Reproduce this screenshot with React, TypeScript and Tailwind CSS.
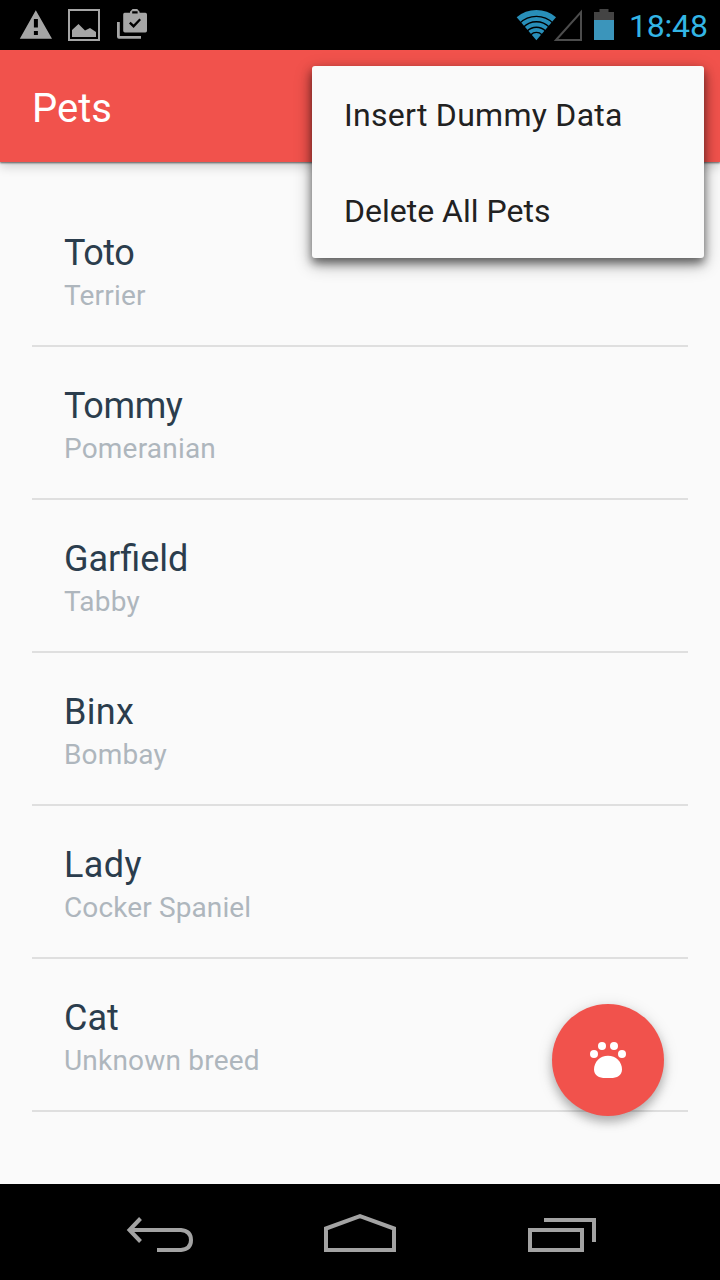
const pets = [
  { name: "Toto", breed: "Terrier", nameSpacing: "tracking-[-0.5px]", breedSpacing: "tracking-[0.2px]" },
  { name: "Tommy", breed: "Pomeranian", nameSpacing: "tracking-[-0.4px]", breedSpacing: "tracking-[0.2px]" },
  { name: "Garfield", breed: "Tabby", nameSpacing: "[word-spacing:0]", breedSpacing: "tracking-[0.2px]" },
  { name: "Binx", breed: "Bombay", nameSpacing: "tracking-[0.3px]", breedSpacing: "tracking-[0.15px]" },
  { name: "Lady", breed: "Cocker Spaniel", nameSpacing: "tracking-[0.4px]", breedSpacing: "tracking-[0.12px]" },
  { name: "Cat", breed: "Unknown breed", nameSpacing: "tracking-normal", breedSpacing: "tracking-[0.2px]" },
];

function StatusBar() {
  return (
    <header className="flex h-[50px] shrink-0 items-center justify-between bg-black">
      <svg className="h-[50px] w-[160px]" viewBox="0 0 160 50" fill="#a6a6a6">
        <path
          fillRule="evenodd"
          d="M35.8 10.2 52 38.7H19.8ZM33.9 19v8.6h4V19ZM33.9 31v4h4v-4Z"
        />
        <path fillRule="evenodd" d="M68 9h32v32H68ZM70 11v28h28V11Z" />
        <path d="M72 37v-7l6.5-6 6.5 6.5 5-2.5 6 4v5Z" />
        <path
          fillRule="evenodd"
          d="M124.6 12.8h5.4v-1l2.6-2.8h4.6l2.4 2.8v1h5.8q1.6 0 1.6 1.6v16.4q0 1.8-1.6 1.8H125q-1.8 0-1.8-1.8V14.4q0-1.6 1.4-1.6ZM132.2 13.4h5.4v-2.2h-5.4ZM130.6 21.8l-1.6 1.6 4.6 4.6 7.4-8-1.6-1.6-5.8 6.2Z"
        />
        <path d="M117 22h2.8v14H141v2.8h-22q-2 0-2-2Z" />
      </svg>
      <div className="flex items-center">
        <svg className="h-[50px] w-[121px]" viewBox="508 0 121 50">
          <path d="M516.7 17.2A30.2 30.2 0 0 1 556 17.2L536.4 40.3Z" fill="#288fb9" />
          <g fill="none" stroke="#000" strokeWidth="1.4">
            <circle cx="536.4" cy="40.2" r="23.8" />
            <circle cx="536.4" cy="40.2" r="18.4" />
            <circle cx="536.4" cy="40.2" r="13" />
            <circle cx="536.4" cy="40.2" r="7.8" />
          </g>
          <path d="M556 40 581 12V40Z" fill="none" stroke="#4c4c4c" strokeWidth="2" />
          <path d="M594 20v-8h5.5V9h9v3h5.5v8Z" fill="#444" />
          <path d="M594 20h20v20h-20Z" fill="#3b95bb" />
        </svg>
        <span className="w-[91px] pt-0.5 text-[32px] leading-[50px] tracking-[-0.2px] text-[#33b5e5]">
          18:48
        </span>
      </div>
    </header>
  );
}

function OverflowMenu() {
  return (
    <div className="absolute top-[66px] right-4 z-20 w-[392px] rounded-[3px] bg-[#fafafa] text-[32px] leading-[98px] text-[#212121] shadow-[0_5px_10px_rgba(0,0,0,0.5),0_6px_18px_rgba(0,0,0,0.32)]">
      <div className="h-24 px-8 tracking-[0.28px]">Insert Dummy Data</div>
      <div className="h-24 px-8">Delete All Pets</div>
    </div>
  );
}

function AddPetButton() {
  return (
    <button
      aria-label="Add pet"
      className="absolute right-14 bottom-[164px] z-10 flex size-28 items-center justify-center rounded-full bg-[#f1524c] shadow-[0_6px_10px_rgba(0,0,0,0.22),0_3px_16px_rgba(0,0,0,0.15)]"
    >
      <svg className="size-12" viewBox="0 0 48 48" fill="#fff">
        <circle cx="10" cy="18" r="4" />
        <circle cx="18" cy="10" r="4" />
        <circle cx="30" cy="10" r="4" />
        <circle cx="38" cy="18" r="4" />
        <path d="M24 19.8C32 19.8 38 26 38 33.5C38 39.5 33 42 26.5 42H21.5C15 42 10 39.5 10 33.5C10 26 16 19.8 24 19.8Z" />
      </svg>
    </button>
  );
}

function NavigationBar() {
  return (
    <nav className="flex h-24 shrink-0 items-center bg-black">
      <svg className="h-24 w-full" viewBox="0 0 720 96" fill="none" stroke="#a3a3a3" strokeWidth="4">
        <path d="M140.5 34.5 129.5 46 140.5 57.5M130 46H181Q191 47 191 56Q191 65 181 66H157" />
        <path d="M326 66V44.5L360 32.2 394 44.5V66Z" />
        <path d="M530 46H582V66H530ZM544 36H594V58" />
      </svg>
    </nav>
  );
}

export default function App() {
  return (
    <div className="relative flex h-[1280px] w-[720px] flex-col overflow-hidden bg-[#fafafa] font-[Roboto,sans-serif]">
      <StatusBar />
      <div className="relative flex h-28 shrink-0 items-center bg-[#f1524c] px-8 shadow-[0_1px_2px_rgba(0,0,0,0.6),0_5px_10px_rgba(0,0,0,0.16)]">
        <h1 className="pt-1.5 text-[40px] leading-[48px] text-white">Pets</h1>
      </div>
      <main className="flex-1 px-8 pt-8">
        <ul>
          {pets.map((pet) => (
            <li key={pet.name} className="h-[153px] border-b-2 border-[#dfdfdf] px-8 pt-8">
              <div className={`text-[36px] leading-[54px] text-[#2b3d4d] ${pet.nameSpacing}`}>
                {pet.name}
              </div>
              <div className={`text-[28px] leading-[31px] text-[#aeb6bd] ${pet.breedSpacing}`}>
                {pet.breed}
              </div>
            </li>
          ))}
        </ul>
      </main>
      <NavigationBar />
      <OverflowMenu />
      <AddPetButton />
    </div>
  );
}
